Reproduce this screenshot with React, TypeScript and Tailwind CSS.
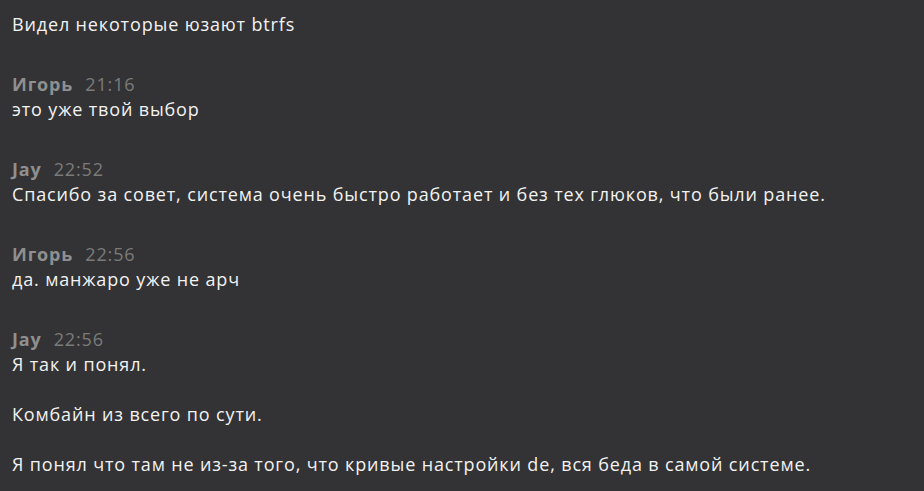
type Message = {
  author?: string;
  time?: string;
  paragraphs: string[];
};

const messages: Message[] = [
  { paragraphs: ["Видел некоторые юзают btrfs"] },
  { author: "Игорь", time: "21:16", paragraphs: ["это уже твой выбор"] },
  {
    author: "Jay",
    time: "22:52",
    paragraphs: [
      "Спасибо за совет, система очень быстро работает и без тех глюков, что были ранее.",
    ],
  },
  { author: "Игорь", time: "22:56", paragraphs: ["да. манжаро уже не арч"] },
  {
    author: "Jay",
    time: "22:56",
    paragraphs: [
      "Я так и понял.",
      "Комбайн из всего по сути.",
      "Я понял что там не из-за того, что кривые настройки de, вся беда в самой системе.",
    ],
  },
];

function MessageBlock({ msg }: { msg: Message }) {
  return (
    <div className="flex flex-col">
      {msg.author ? (
        <div className="flex items-baseline gap-3 leading-[25px]">
          <span className="font-bold text-[#8f8f8f]">{msg.author}</span>
          <span className="text-[#7b7b7b]">{msg.time}</span>
        </div>
      ) : null}
      <div className="flex flex-col gap-[25px]">
        {msg.paragraphs.map((p, i) => (
          <p key={i} className="leading-[25px] text-[#f2f2f2]">
            {p}
          </p>
        ))}
      </div>
    </div>
  );
}

export default function App() {
  return (
    <div
      className="w-[924px] h-[491px] overflow-hidden bg-[#333335] px-3 pt-3 text-[18px] tracking-[0.85px] flex flex-col gap-[35px]"
      style={{ fontFamily: '"Open Sans", "Noto Sans", sans-serif' }}
    >
      {messages.map((m, i) => (
        <MessageBlock key={i} msg={m} />
      ))}
    </div>
  );
}
